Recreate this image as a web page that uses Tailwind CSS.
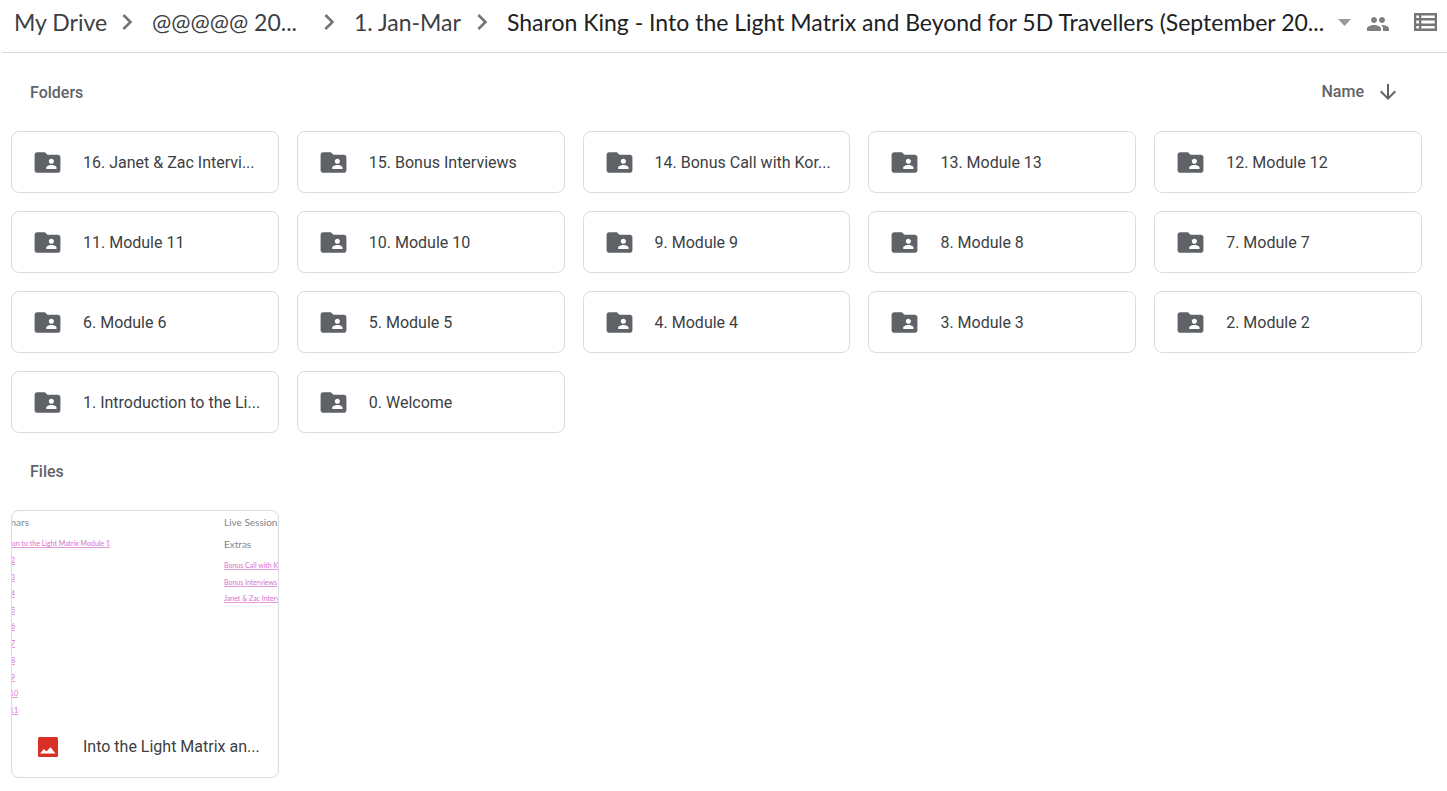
<!DOCTYPE html>
<html lang="en">
<head>
    <meta charset="UTF-8">
    <meta name="viewport" content="width=device-width, initial-scale=1">
    <title>My Drive</title>
    <script src="https://cdn.jsdelivr.net/npm/@tailwindcss/browser@4"></script>
</head>
<body class="min-h-screen bg-white font-[Roboto,sans-serif] text-[#3c4043]">
    <!-- Shared icons -->
    <svg class="hidden">
        <symbol id="chevron" viewBox="0 0 24 24">
            <path d="M10 6 8.590 7.410 13.170 12l-4.580 4.590L10 18l6-6z"/>
        </symbol>
        <symbol id="folder-shared" viewBox="0 0 24 24">
            <path d="M20 6h-8l-2-2H4c-1.100 0-1.990.9-1.990 2L2 18c0 1.100.9 2 2 2h16c1.100 0 2-.9 2-2V8c0-1.100-.9-2-2-2zm-5 3c1.100 0 2 .9 2 2s-.9 2-2 2-2-.9-2-2 .9-2 2-2zm4 8h-8v-1c0-1.330 2.670-2 4-2s4 .67 4 2v1z"/>
        </symbol>
    </svg>

    <!-- Breadcrumbs -->
    <header class="ml-0.5 flex h-[53px] items-center border-b border-[#dadce0] pb-2 pl-3 pr-2.5">
        <nav aria-label="Breadcrumb" class="flex min-w-0 flex-1 items-center whitespace-nowrap font-[Lato,sans-serif] text-[23px] leading-7">
            <a href="#" class="w-[97px] shrink-0">My Drive</a>
            <svg class="mr-[9px] size-8 shrink-0 fill-[#757575]"><use href="#chevron"/></svg>
            <a href="#" class="w-[161px] shrink-0">@@@@@ 20...</a>
            <svg class="mr-[9px] size-8 shrink-0 fill-[#757575]"><use href="#chevron"/></svg>
            <a href="#" class="w-[112px] shrink-0">1. Jan-Mar</a>
            <svg class="mr-[9px] size-8 shrink-0 fill-[#757575]"><use href="#chevron"/></svg>
            <button type="button" class="flex min-w-0 flex-1 items-center justify-between text-[#202124]">
                <span>Sharon King - Into the Light Matrix and Beyond for 5D Travellers (September 20...</span>
                <svg class="h-[7px] w-[13px] shrink-0 fill-[#999]" viewBox="0 0 13 7"><path d="M0 0h13L6.500 7z"/></svg>
            </button>
        </nav>
        <button type="button" aria-label="Shared" class="ml-[15px] mt-1">
            <svg class="size-6 fill-[#808080]" viewBox="0 0 24 24"><path d="M16 11c1.660 0 2.990-1.340 2.990-3S17.660 5 16 5s-3 1.340-3 3 1.340 3 3 3zm-8 0c1.660 0 2.990-1.340 2.990-3S9.660 5 8 5 5 6.340 5 8s1.340 3 3 3zm0 2c-2.330 0-7 1.170-7 3.500V19h14v-2.500c0-2.330-4.670-3.500-7-3.500zm8 0c-.29 0-.62.020-.97.050 1.160.84 1.970 1.970 1.970 3.450V19h6v-2.500c0-2.330-4.670-3.500-7-3.500z"/></svg>
        </button>
        <button type="button" aria-label="List view" class="ml-6">
            <svg class="h-[18px] w-[23px] fill-[#757575]" viewBox="0 0 23 18"><path fill-rule="evenodd" d="M0 0h23v18H0zM2.300 2.500v2.500h2.700V2.500zm5 0v2.500h13.400V2.500zM2.300 7.500v3h2.700v-3zm5 0v3h13.400v-3zM2.300 13v2.500h2.700V13zm5 0v2.500h13.400V13z"/></svg>
        </button>
    </header>

    <main class="pl-[11px] pr-[25px]">
        <!-- Folders -->
        <div class="flex h-[78px] items-center justify-between pl-[19px] pr-[22px] font-medium text-[#5f6368]">
            <h2 class="pt-0.5">Folders</h2>
            <button type="button" class="flex items-center gap-3">
                Name
                <svg class="size-6 fill-[#5f6368]" viewBox="0 0 24 24"><path d="m20 12-1.410-1.410L13 16.170V4h-2v12.170l-5.580-5.590L4 12l8 8z"/></svg>
            </button>
        </div>
        <div id="folders" class="grid grid-cols-5 gap-[18px]"></div>

        <!-- Files -->
        <h2 class="flex h-[77px] items-center pl-[19px] font-medium text-[#5f6368]">Files</h2>
        <div class="grid grid-cols-5 gap-[18px]">
            <a href="#" class="block overflow-hidden rounded-lg border border-[#dadce0]">
                <svg class="h-[204px] w-full font-[Lato,sans-serif]" viewBox="0 0 266 204" preserveAspectRatio="xMinYMin slice">
                    <g class="fill-[#80868b] text-[10px]">
                        <text x="17" y="15" text-anchor="end">Webinars</text>
                        <text x="212" y="15">Live Sessions</text>
                        <text x="212" y="37">Extras</text>
                    </g>
                    <g class="fill-[#d66fd0] text-[7px] underline" text-anchor="end">
                        <text x="98" y="35">Introduction to the Light Matrix Module 1</text>
                        <text x="3" y="52">Module 2</text>
                        <text x="3" y="69">Module 3</text>
                        <text x="3" y="85">Module 4</text>
                        <text x="3" y="102">Module 5</text>
                        <text x="3" y="118">Module 6</text>
                        <text x="3" y="135">Module 7</text>
                        <text x="3" y="152">Module 8</text>
                        <text x="3" y="169">Module 9</text>
                        <text x="6" y="185">Module 10</text>
                        <text x="6" y="202">Module 11</text>
                    </g>
                    <g class="fill-[#d66fd0] text-[7px] underline">
                        <text x="212" y="57">Bonus Call with Kora</text>
                        <text x="212" y="74">Bonus Interviews</text>
                        <text x="212" y="90">Janet &amp; Zac Interviews</text>
                    </g>
                </svg>
                <div class="flex h-[62px] items-center gap-5 whitespace-nowrap pl-5 pt-0.5">
                    <span class="flex w-[31px] justify-center">
                        <svg class="size-5" viewBox="0 0 20 20">
                            <rect width="20" height="20" rx="1.500" fill="#d93025"/>
                            <path fill="#fff" d="M2 16.500 5.800 12l2.700 2.500L12.500 10.200l5 6.300z"/>
                        </svg>
                    </span>
                    <span>Into the Light Matrix an...</span>
                </div>
            </a>
        </div>
    </main>

    <script>
    const folders = [
        '16. Janet & Zac Intervi...', '15. Bonus Interviews', '14. Bonus Call with Kor...', '13. Module 13', '12. Module 12',
        '11. Module 11', '10. Module 10', '9. Module 9', '8. Module 8', '7. Module 7',
        '6. Module 6', '5. Module 5', '4. Module 4', '3. Module 3', '2. Module 2',
        '1. Introduction to the Li...', '0. Welcome'
    ];

    document.getElementById('folders').innerHTML = folders.map(name => `
        <a href="#" class="flex h-[62px] items-center gap-5 whitespace-nowrap rounded-lg border border-[#dadce0] pl-5">
            <svg class="size-[31px] shrink-0 fill-[#5f6368]"><use href="#folder-shared"/></svg>
            <span class="pt-0.5">${name.replace('&', '&amp;')}</span>
        </a>`).join('');
    </script>
</body>
</html>
